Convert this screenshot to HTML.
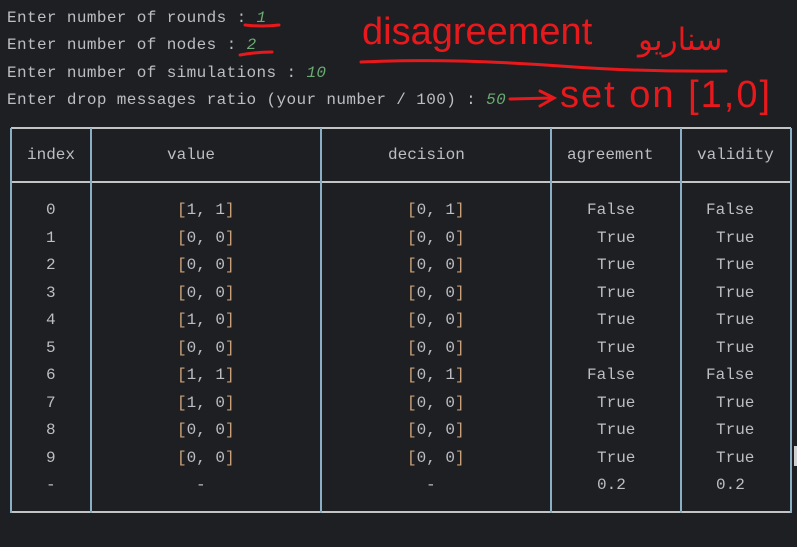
<!DOCTYPE html>
<html><head><meta charset="utf-8"><style>
html,body{margin:0;padding:0;background:#1e1f22;width:797px;height:547px;overflow:hidden;position:relative}
.t{position:absolute;font-family:"Liberation Mono",monospace;font-size:16px;color:#bcbec4;white-space:pre;line-height:20px}
.p{letter-spacing:0.38px}
.g{color:#6aab73;font-style:italic}
.b{color:#c9a07a}
.h{position:absolute;height:2px;background:#c4c4c4}
.v{position:absolute;width:2px;background:#8aaec4}
.r{position:absolute;font-family:"Liberation Sans","DejaVu Sans",sans-serif;color:#e8191c;white-space:pre}
</style></head><body>
<div class="t p" style="left:7px;top:8px">Enter number of rounds : <span class="g">1</span></div>
<div class="t p" style="left:7px;top:35px">Enter number of nodes : <span class="g">2</span></div>
<div class="t p" style="left:7px;top:63px">Enter number of simulations : <span class="g">10</span></div>
<div class="t p" style="left:7px;top:90px">Enter drop messages ratio (your number / 100) : <span class="g">50</span></div>

<svg style="position:absolute;left:0;top:0" width="797" height="547">
<g stroke="#e8191c" stroke-width="3" fill="none" stroke-linecap="round">
<path d="M245 25 Q262 27 279 25"/>
<path d="M240 55 Q256 52 272 52"/>
<path d="M361 62 Q450 58 560 66 Q640 72 726 71"/>
<path d="M510 99 L552 98 M540 91 L554 98 L540 106"/>
</g></svg>
<div class="r" style="left:362px;top:11px;font-size:38px">disagreement</div>
<div class="r" style="left:638px;top:22px;font-size:31px;font-family:'DejaVu Sans',sans-serif">سناریو</div>
<div class="r" style="left:560px;top:74px;font-size:38px;letter-spacing:2px">set on [1,0]</div>

<div class="h" style="left:11px;top:127px;width:780px"></div>
<div class="h" style="left:11px;top:181px;width:780px"></div>
<div class="h" style="left:11px;top:511px;width:780px"></div>
<div class="v" style="left:10px;top:128px;height:385px"></div>
<div class="v" style="left:90px;top:128px;height:385px"></div>
<div class="v" style="left:320px;top:128px;height:385px"></div>
<div class="v" style="left:550px;top:128px;height:385px"></div>
<div class="v" style="left:680px;top:128px;height:385px"></div>
<div class="v" style="left:790px;top:128px;height:385px"></div>
<div style="position:absolute;left:794px;top:446px;width:3px;height:20px;background:#d0d0d0"></div>

<div class="t" style="left:27px;top:145px">index</div>
<div class="t" style="left:167px;top:145px">value</div>
<div class="t" style="left:388px;top:145px">decision</div>
<div class="t" style="left:567px;top:145px">agreement</div>
<div class="t" style="left:697px;top:145px">validity</div>

<div class="t" style="left:46px;top:200px">0</div><div class="t" style="left:177px;top:200px"><span class="b">[</span>1, 1<span class="b">]</span></div><div class="t" style="left:407px;top:200px"><span class="b">[</span>0, 1<span class="b">]</span></div><div class="t" style="left:587px;top:200px">False</div><div class="t" style="left:706px;top:200px">False</div>
<div class="t" style="left:46px;top:228px">1</div><div class="t" style="left:177px;top:228px"><span class="b">[</span>0, 0<span class="b">]</span></div><div class="t" style="left:407px;top:228px"><span class="b">[</span>0, 0<span class="b">]</span></div><div class="t" style="left:597px;top:228px">True</div><div class="t" style="left:716px;top:228px">True</div>
<div class="t" style="left:46px;top:255px">2</div><div class="t" style="left:177px;top:255px"><span class="b">[</span>0, 0<span class="b">]</span></div><div class="t" style="left:407px;top:255px"><span class="b">[</span>0, 0<span class="b">]</span></div><div class="t" style="left:597px;top:255px">True</div><div class="t" style="left:716px;top:255px">True</div>
<div class="t" style="left:46px;top:283px">3</div><div class="t" style="left:177px;top:283px"><span class="b">[</span>0, 0<span class="b">]</span></div><div class="t" style="left:407px;top:283px"><span class="b">[</span>0, 0<span class="b">]</span></div><div class="t" style="left:597px;top:283px">True</div><div class="t" style="left:716px;top:283px">True</div>
<div class="t" style="left:46px;top:310px">4</div><div class="t" style="left:177px;top:310px"><span class="b">[</span>1, 0<span class="b">]</span></div><div class="t" style="left:407px;top:310px"><span class="b">[</span>0, 0<span class="b">]</span></div><div class="t" style="left:597px;top:310px">True</div><div class="t" style="left:716px;top:310px">True</div>
<div class="t" style="left:46px;top:338px">5</div><div class="t" style="left:177px;top:338px"><span class="b">[</span>0, 0<span class="b">]</span></div><div class="t" style="left:407px;top:338px"><span class="b">[</span>0, 0<span class="b">]</span></div><div class="t" style="left:597px;top:338px">True</div><div class="t" style="left:716px;top:338px">True</div>
<div class="t" style="left:46px;top:365px">6</div><div class="t" style="left:177px;top:365px"><span class="b">[</span>1, 1<span class="b">]</span></div><div class="t" style="left:407px;top:365px"><span class="b">[</span>0, 1<span class="b">]</span></div><div class="t" style="left:587px;top:365px">False</div><div class="t" style="left:706px;top:365px">False</div>
<div class="t" style="left:46px;top:393px">7</div><div class="t" style="left:177px;top:393px"><span class="b">[</span>1, 0<span class="b">]</span></div><div class="t" style="left:407px;top:393px"><span class="b">[</span>0, 0<span class="b">]</span></div><div class="t" style="left:597px;top:393px">True</div><div class="t" style="left:716px;top:393px">True</div>
<div class="t" style="left:46px;top:420px">8</div><div class="t" style="left:177px;top:420px"><span class="b">[</span>0, 0<span class="b">]</span></div><div class="t" style="left:407px;top:420px"><span class="b">[</span>0, 0<span class="b">]</span></div><div class="t" style="left:597px;top:420px">True</div><div class="t" style="left:716px;top:420px">True</div>
<div class="t" style="left:46px;top:448px">9</div><div class="t" style="left:177px;top:448px"><span class="b">[</span>0, 0<span class="b">]</span></div><div class="t" style="left:407px;top:448px"><span class="b">[</span>0, 0<span class="b">]</span></div><div class="t" style="left:597px;top:448px">True</div><div class="t" style="left:716px;top:448px">True</div>
<div class="t" style="left:46px;top:475px">-</div><div class="t" style="left:196px;top:475px">-</div><div class="t" style="left:426px;top:475px">-</div><div class="t" style="left:597px;top:475px">0.2</div><div class="t" style="left:716px;top:475px">0.2</div>
</body></html>
